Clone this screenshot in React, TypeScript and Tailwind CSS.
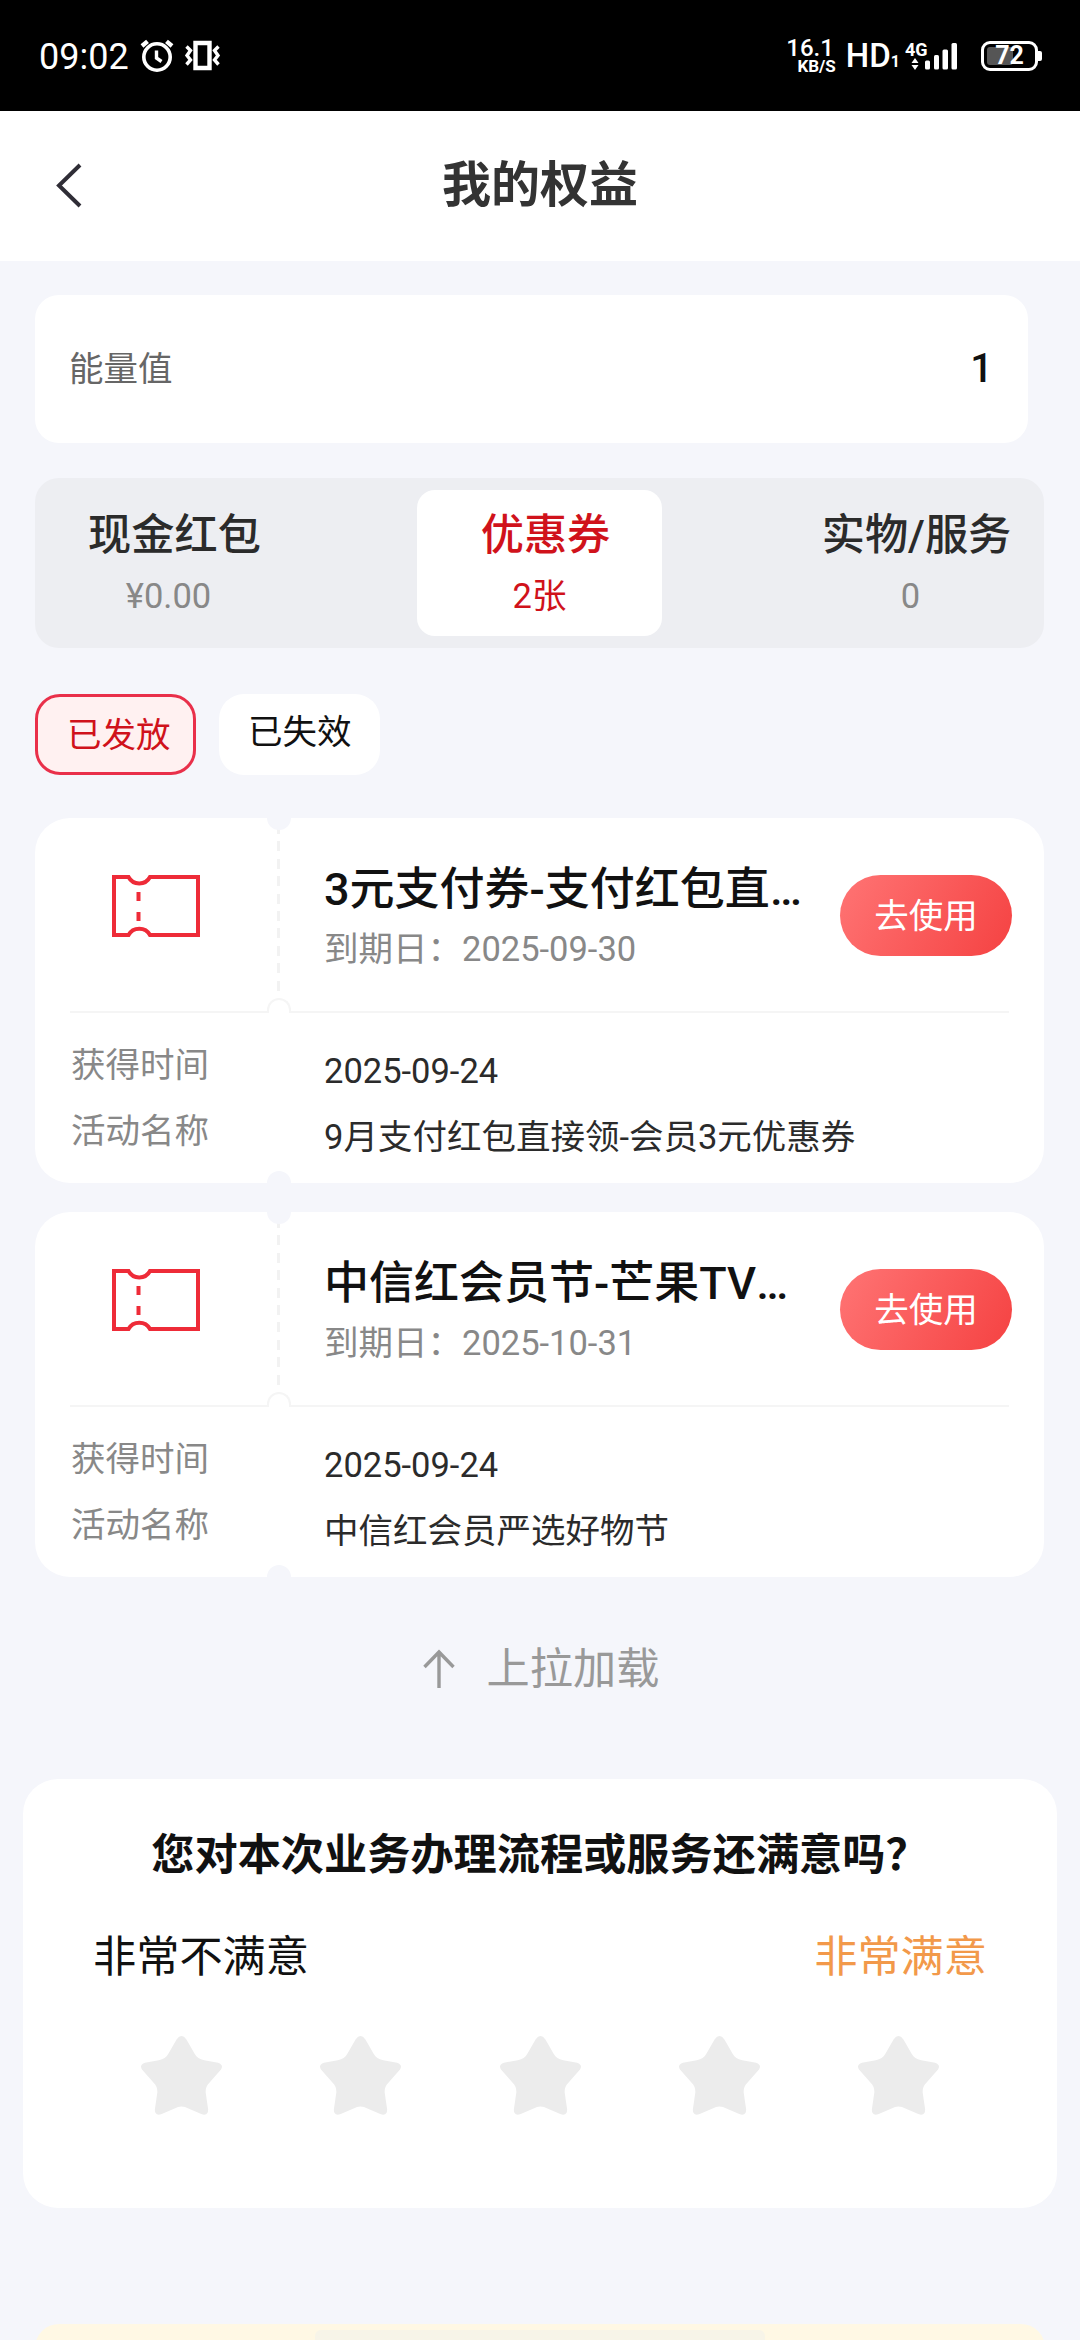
const tabs = [
  { name: "现金红包", value: "¥0.00", active: false },
  { name: "优惠券", value: "2张", active: true },
  { name: "实物/服务", value: "0", active: false },
];

const filters = [
  { name: "已发放", active: true },
  { name: "已失效", active: false },
];

const coupons = [
  {
    title: "3元支付券-支付红包直",
    expires: "2025-09-30",
    received: "2025-09-24",
    activity: "9月支付红包直接领-会员3元优惠券",
  },
  {
    title: "中信红会员节-芒果TV",
    expires: "2025-10-31",
    received: "2025-09-24",
    activity: "中信红会员严选好物节",
  },
];

function AlarmIcon() {
  return (
    <svg width="34" height="34" viewBox="0 0 34 34" fill="none" stroke="#fff">
      <circle cx="17" cy="18" r="13.2" strokeWidth="3.6" />
      <path d="M16.5 11.5v7.5l5 3.5" strokeWidth="3.4" />
      <path d="M2 7l5.5-4.6M32 7l-5.5-4.6" strokeWidth="4.4" />
    </svg>
  );
}

function VibrateIcon() {
  return (
    <svg width="37" height="32" viewBox="0 0 37 32" fill="none" stroke="#fff">
      <path d="M11.5 3h14v25h-14z" strokeWidth="4.4" />
      <path d="M2.5 6.5l4 4-3.5 5 3.5 4.500-4 4.500" strokeWidth="3.4" />
      <path d="M34.5 6.5l-4 4 3.500 5-3.500 4.500 4 4.500" strokeWidth="3.4" />
    </svg>
  );
}

function SignalIcon() {
  return (
    <svg width="46" height="28" viewBox="0 0 46 28" fill="#fff">
      <path d="M0.5 21L4 16l3.5 5zM0.5 23L4 28l3.5-5z" />
      <rect x="14" y="18.5" width="5" height="9" rx="1.5" />
      <rect x="23" y="13" width="5" height="14.5" rx="1.5" />
      <rect x="31.5" y="7.5" width="5.5" height="20" rx="1.5" />
      <rect x="40.5" y="1" width="5.5" height="26.5" rx="1.5" />
    </svg>
  );
}

function StatusBar() {
  return (
    <div className="flex h-[111px] items-center bg-black pl-[39px] pr-[38px] text-white">
      <span className="mt-[3px] text-[36px] leading-[40px]">09:02</span>
      <div className="ml-[11px] flex items-center gap-[10px]">
        <AlarmIcon />
        <VibrateIcon />
      </div>
      <div className="ml-auto flex items-center">
        <div className="flex flex-col items-end pt-[2px] font-medium">
          <span className="mr-[2px] text-[24px] leading-[19px]">16.1</span>
          <span className="text-[17px] font-bold leading-[17px]">KB/S</span>
        </div>
        <div className="ml-[10px] flex items-baseline font-medium">
          <span className="text-[33px] leading-[40px]">HD</span>
          <span className="text-[16px] font-bold">1</span>
        </div>
        <div className="relative ml-[11px] h-[28px]">
          <span className="absolute -left-[6px] -top-[1px] text-[18px] font-bold leading-[18px]">4G</span>
          <SignalIcon />
        </div>
        <div className="ml-[24px] flex items-center">
          <div className="relative flex h-[30px] w-[57px] items-center justify-center rounded-[9px] border-[3px] border-white">
            <div className="absolute left-[3px] top-[3px] h-[18px] w-[26px] rounded-[3px] bg-[#555]" />
            <span className="relative text-[25px] font-bold leading-[24px]">72</span>
          </div>
          <div className="h-[10px] w-[4px] rounded-r-[2px] bg-white" />
        </div>
      </div>
    </div>
  );
}

function Header() {
  return (
    <header className="relative flex h-[150px] items-center justify-center bg-white">
      <svg className="absolute left-[54px] top-[50px]" width="30" height="48" viewBox="0 0 30 48" fill="none">
        <path d="M26 4L5 24.5L26 45" stroke="#2f2d36" strokeWidth="4" />
      </svg>
      <h1 className="text-[49px] font-bold leading-[60px] text-[#333]">我的权益</h1>
    </header>
  );
}

function TicketIcon() {
  return (
    <svg width="88" height="62" viewBox="0 0 88 62" fill="none" stroke="#ee2b38" strokeWidth="4">
      <path d="M2 2h14.500c4.500 8.500 17 8.500 21.500 0H86v58H38c-4.500-8.500-17-8.500-21.500 0H2z" />
      <path d="M26.5 17v9M26.5 37v9" />
    </svg>
  );
}

function CouponCard({ coupon }: { coupon: (typeof coupons)[number] }) {
  return (
    <section className="relative h-[365px] overflow-hidden rounded-[35px] bg-white">
      <div className="absolute left-[242px] top-[6px] h-[174px] w-[3px] bg-[repeating-linear-gradient(to_bottom,#f2f2f2_0_10px,transparent_10px_17.4px)]" />
      <div className="absolute -top-[12px] left-[232px] size-[24px] rounded-full bg-[#f5f6fb]" />
      <div className="absolute -bottom-[12px] left-[232px] size-[24px] rounded-full bg-[#f5f6fb]" />
      <div className="absolute left-[232px] top-[180px] z-10 h-[15px] w-[24px] rounded-t-full border-2 border-b-0 border-[#f5f5f5] bg-white" />

      <div className="mx-[35px] flex h-[195px] border-b-2 border-[#f5f5f5]">
        <div className="w-[254px] shrink-0 pl-[42px] pt-[57px]">
          <TicketIcon />
        </div>
        <div className="w-[480px] pt-[42px]">
          <h2 className="flex whitespace-nowrap text-[45px] font-medium leading-[60px] text-[#111]">
            <span>{coupon.title}</span>
            <span>…</span>
          </h2>
          <p className="text-[34.5px] leading-[58px] text-[#888]">到期日：{coupon.expires}</p>
        </div>
        <button className="-mr-[3px] ml-auto mt-[57px] h-[81px] w-[172px] shrink-0 rounded-full bg-[linear-gradient(120deg,#ff7474,#f54242)] pt-[2px] text-[34.5px] leading-[79px] text-white">
          去使用
        </button>
      </div>

      <div className="flex pl-[36px] text-[34.5px] leading-[66px]">
        <div className="w-[253px] pt-[19px] text-[#888]">
          <p>获得时间</p>
          <p>活动名称</p>
        </div>
        <div className="pt-[25px] text-[#2b2b2b]">
          <p>{coupon.received}</p>
          <p>{coupon.activity}</p>
        </div>
      </div>
    </section>
  );
}

function Star() {
  return (
    <svg width="81" height="80" viewBox="0 0 82 80" fill="#ececec">
      <path d="M36 4Q41-3 46 4L54 18Q57 24 64 25L78 27.5Q84 29.5 81 34.5L69 48Q65 52 65.5 58L68 75Q68 82 61 79.5L48 74Q41 70 34 74L21 79.5Q14 82 14 75L16.5 58Q17 52 13 48L1 34.5Q-2 29.5 4 27.5L18 25Q25 24 28 18Z" />
    </svg>
  );
}

function Survey() {
  return (
    <section className="mx-[23px] h-[429px] rounded-[35px] bg-white pt-[47px]">
      <h2 className="text-center text-[43.2px] font-bold leading-[60px] text-[#111]">
        您对本次业务办理流程或服务还满意吗？
      </h2>
      <div className="mt-[42px] flex justify-between px-[70px] text-[43.2px] leading-[60px]">
        <span className="text-[#111]">非常不满意</span>
        <span className="text-[#f2994a]">非常满意</span>
      </div>
      <div className="mt-[47px] flex justify-between px-[118px]">
        {[1, 2, 3, 4, 5].map((n) => (
          <Star key={n} />
        ))}
      </div>
    </section>
  );
}

export default function App() {
  return (
    <div className="h-[2340px] w-[1080px] overflow-hidden bg-[#f5f6fb] font-[Roboto,'Noto_Sans_CJK_SC',sans-serif]">
      <StatusBar />
      <Header />

      <main className="pl-[35px] pr-[36px] pt-[34px]">
        <div className="mr-[16px] flex h-[148px] items-center justify-between rounded-[24px] bg-white pb-[1px] pl-[34px] pr-[35px]">
          <span className="text-[34.5px] leading-[48px] text-[#666]">能量值</span>
          <span className="text-[40px] font-medium leading-[48px] text-[#111]">1</span>
        </div>

        <div className="mt-[35px] flex h-[170px] items-center justify-between rounded-[24px] bg-[#edeef2] px-[11px]">
          {tabs.map((tab) => (
            <div
              key={tab.name}
              className={`h-[146px] w-[245px] rounded-[18px] pt-[16px] text-center ${
                tab.active ? "bg-white text-[#d0121b]" : "text-[#2b2b2b]"
              }`}
            >
              <p className="pl-[12px] text-[43.2px] font-medium leading-[60px]">{tab.name}</p>
              <p className={`text-[34.5px] leading-[61px] ${tab.active ? "" : "text-[#888]"}`}>{tab.value}</p>
            </div>
          ))}
        </div>

        <div className="mt-[46px] flex gap-[23px]">
          {filters.map((filter) => (
            <button
              key={filter.name}
              className={`flex h-[81px] w-[161px] rounded-[25px] pl-[29px] text-[34.5px] leading-[77px] ${
                filter.active
                  ? "border-3 border-[#e9304a] bg-[#fff1f1] text-[#d0121b]"
                  : "bg-white text-[#111]"
              }`}
            >
              {filter.name}
            </button>
          ))}
        </div>

        <div className="mt-[43px] flex flex-col gap-[29px]">
          {coupons.map((coupon) => (
            <CouponCard key={coupon.title} coupon={coupon} />
          ))}
        </div>
      </main>

      <div className="mt-[57px] flex h-[72px] items-center justify-center text-[#999]">
        <svg className="mb-[3px]" width="34" height="42" viewBox="0 0 34 42" fill="none" stroke="#999" strokeWidth="3.4">
          <path d="M18 40V4M3.5 19L18 4l14.5 15" />
        </svg>
        <span className="ml-[32px] text-[43.2px] leading-[60px]">上拉加载</span>
      </div>

      <div className="pt-[73px]">
        <Survey />
      </div>

      <div className="mx-[35px] mt-[116px] flex h-[60px] justify-center rounded-t-[24px] bg-[#fff8e4] pt-[6px]">
        <div className="h-[40px] w-[450px] rounded-[6px] bg-[#f7f4e8]" />
      </div>
    </div>
  );
}
